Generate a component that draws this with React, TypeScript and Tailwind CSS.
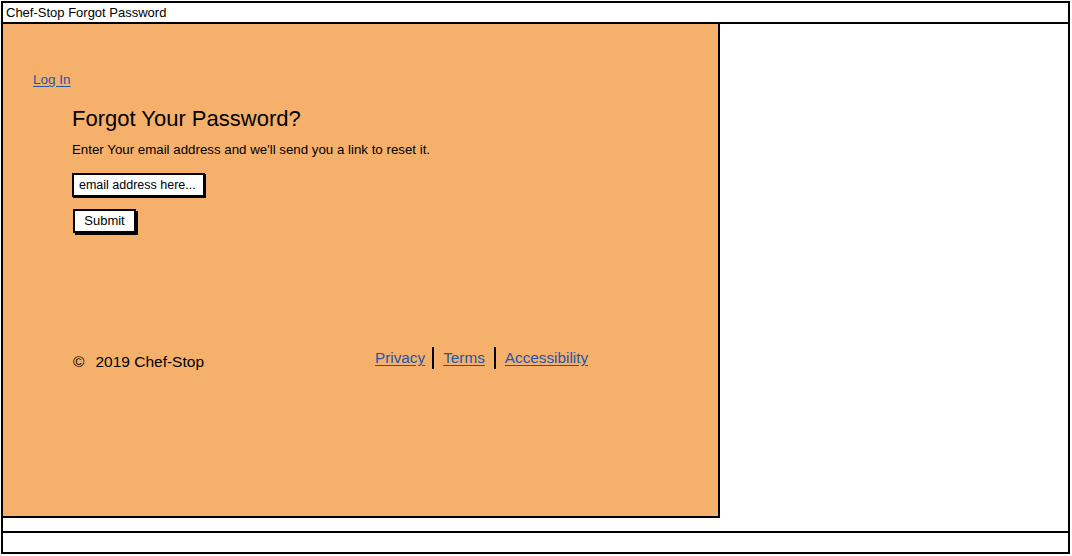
import React from 'react';

// Wireframe of the Chef-Stop "forgot password" page

const font = { fontFamily: '"Liberation Sans", Arial, sans-serif' };

function FooterLink({ children, className = '' }: { children: React.ReactNode; className?: string }) {
  return (
    <a href="#" className={`text-[15.3px] leading-[20px] text-[#1f56a8] underline underline-offset-2 ${className}`}>
      {children}
    </a>
  );
}

export default function App() {
  return (
    <div className="w-[1072px] h-[556px] bg-white p-px text-black" style={font}>
      <div className="w-[1069px] h-[553px] border-2 border-black flex flex-col">
        {/* Title bar */}
        <div className="h-[21px] border-b-2 border-black flex items-center px-[3px] text-[13px] leading-none">
          Chef-Stop Forgot Password
        </div>

        {/* Orange panel */}
        <div className="w-[717px] h-[494px] bg-[#f5b06b] border-r-2 border-b-2 border-black flex flex-col">
          <div className="pl-[30px] pt-[43px]">
            <a href="#" className="text-[13.5px] leading-[16px] text-[#1f56a8] underline underline-offset-2">
              Log In
            </a>
          </div>

          <div className="pl-[69px] pt-[14px] flex flex-col items-start">
            <h1 className="text-[22px] leading-[28px]">Forgot Your Password?</h1>
            <p className="mt-[9px] text-[13.3px] leading-[16px]">
              Enter Your email address and we'll send you a link to reset it.
            </p>
            <div className="mt-[15px] w-[133px] h-[24px] bg-white border-2 border-black shadow-[1px_1px_0_#000] flex items-center pl-[5px] text-[12.5px] whitespace-nowrap">
              email address here...
            </div>
            <button className="mt-[12px] ml-px w-[63px] h-[24px] bg-white border-2 border-black shadow-[2px_2px_0_#000] text-[13px] flex items-center justify-center">
              Submit
            </button>
          </div>

          {/* Footer */}
          <div className="mt-[109px] pl-[70px] flex items-center">
            <div className="w-[302px] text-[15.5px] pt-[8px]">
              <span className="mr-[11px]">©</span>2019 Chef-Stop
            </div>
            <div className="flex items-center">
              <FooterLink>Privacy</FooterLink>
              <span className="ml-[7px] w-[2px] h-[22px] bg-black" />
              <FooterLink className="ml-[9px]">Terms</FooterLink>
              <span className="ml-[9px] w-[2px] h-[22px] bg-black" />
              <FooterLink className="ml-[9px]">Accessibility</FooterLink>
            </div>
          </div>
        </div>

        <div className="flex-1" />
        <div className="h-[21px] border-t-2 border-black" />
      </div>
    </div>
  );
}
